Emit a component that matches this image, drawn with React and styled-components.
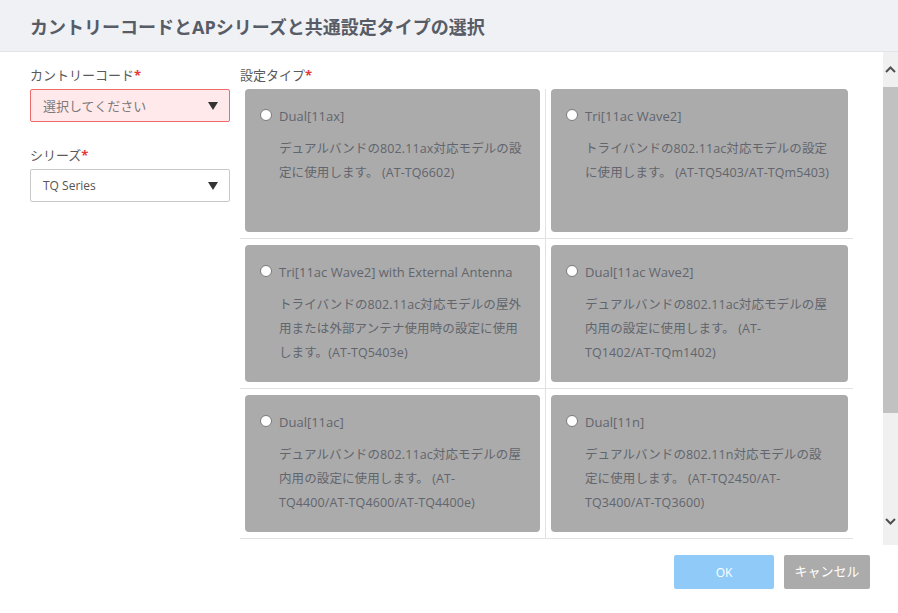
import React from "react";
import styled, { createGlobalStyle } from "styled-components";

const GlobalStyle = createGlobalStyle`
  html, body {
    margin: 0;
    padding: 0;
    background: #fff;
  }
  body {
    font-family: "Open Sans", "Noto Sans CJK JP", sans-serif;
    color: #555;
  }
`;

// models: pieces that must not break inside (line breaks only between them)
const types = [
  {
    name: "Dual[11ax]",
    desc: "デュアルバンドの802.11ax対応モデルの設定に使用します。 ",
    models: ["(AT-TQ6602)"],
  },
  {
    name: "Tri[11ac Wave2]",
    desc: "トライバンドの802.11ac対応モデルの設定に使用します。 ",
    models: ["(AT-TQ5403/AT-TQm5403)"],
  },
  {
    name: "Tri[11ac Wave2] with External Antenna",
    desc: "トライバンドの802.11ac対応モデルの屋外用または外部アンテナ使用時の設定に使用します。",
    models: ["(AT-TQ5403e)"],
  },
  {
    name: "Dual[11ac Wave2]",
    desc: "デュアルバンドの802.11ac対応モデルの屋内用の設定に使用します。 ",
    models: ["(AT-", "TQ1402/AT-TQm1402)"],
  },
  {
    name: "Dual[11ac]",
    desc: "デュアルバンドの802.11ac対応モデルの屋内用の設定に使用します。 ",
    models: ["(AT-", "TQ4400/AT-TQ4600/AT-TQ4400e)"],
  },
  {
    name: "Dual[11n]",
    desc: "デュアルバンドの802.11n対応モデルの設定に使用します。 ",
    models: ["(AT-TQ2450/AT-", "TQ3400/AT-TQ3600)"],
  },
];

const App = () => {
  return (
    <Dialog>
      <GlobalStyle />
      <Header>
        <Title>カントリーコードとAPシリーズと共通設定タイプの選択</Title>
      </Header>

      <Body>
        <Content>
          <LeftCol>
            <Field>
              <Label>
                カントリーコード<Req>*</Req>
              </Label>
              <Select $error>
                <SelectText $placeholder>選択してください</SelectText>
                <Caret />
              </Select>
            </Field>
            <Field>
              <Label>
                シリーズ<Req>*</Req>
              </Label>
              <Select>
                <SelectText>TQ Series</SelectText>
                <Caret />
              </Select>
            </Field>
          </LeftCol>

          <RightCol>
            <Label>
              設定タイプ<Req>*</Req>
            </Label>
            <Grid>
              {types.map((t, i) => (
                <Cell key={t.name} $first={i < 2} $left={i % 2 === 0}>
                  <Card>
                    <CardHead>
                      <Radio />
                      <CardTitle>{t.name}</CardTitle>
                    </CardHead>
                    <CardDesc>
                      {t.desc}
                      {t.models.map((m, j) => (
                        <React.Fragment key={m}>
                          {j > 0 && <wbr />}
                          <Model>{m}</Model>
                        </React.Fragment>
                      ))}
                    </CardDesc>
                  </Card>
                </Cell>
              ))}
            </Grid>
          </RightCol>
        </Content>

        <Scrollbar>
          <ScrollArrow>
            <svg width="11" height="7" viewBox="0 0 11 7">
              <path d="M1 6 L5.5 1.5 L10 6" fill="none" stroke="#505050" strokeWidth="2" />
            </svg>
          </ScrollArrow>
          <Thumb />
          <Track />
          <ScrollArrow>
            <svg width="11" height="7" viewBox="0 0 11 7">
              <path d="M1 1 L5.5 5.5 L10 1" fill="none" stroke="#505050" strokeWidth="2" />
            </svg>
          </ScrollArrow>
          <TrackEnd />
        </Scrollbar>
      </Body>

      <Footer>
        <Button $primary>OK</Button>
        <Button>キャンセル</Button>
      </Footer>
    </Dialog>
  );
};

const Dialog = styled.div`
  width: 898px;
  height: 613px;
  display: flex;
  flex-direction: column;
  overflow: hidden;
`;

const Header = styled.div`
  height: 51px;
  flex-shrink: 0;
  display: flex;
  align-items: center;
  padding-left: 30px;
  background: #f0f1f5;
  border-bottom: 1px solid #e3e4e8;
`;

const Title = styled.h1`
  margin: 0;
  font-size: 18px;
  font-weight: 700;
  color: #575c66;
`;

const Body = styled.div`
  height: 493px;
  flex-shrink: 0;
  display: flex;
  overflow: hidden;
`;

const Content = styled.div`
  flex: 1;
  display: flex;
  gap: 10px;
  padding: 14px 30px 0 30px;
`;

const LeftCol = styled.div`
  width: 200px;
  display: flex;
  flex-direction: column;
  gap: 24px;
`;

const Field = styled.div`
  display: flex;
  flex-direction: column;
`;

const Label = styled.div`
  font-size: 13px;
  line-height: 18px;
  color: #5a5a5a;
  margin-bottom: 5px;
`;

const Req = styled.span`
  color: #e53935;
  font-weight: 700;
`;

const Select = styled.div`
  height: 33px;
  box-sizing: border-box;
  display: flex;
  align-items: center;
  justify-content: space-between;
  padding: 0 11px 0 12px;
  border: 1px solid ${(p) => (p.$error ? "#ef6b6b" : "#c9c9c9")};
  background: ${(p) => (p.$error ? "#ffe9ea" : "#fff")};
  border-radius: 2px;
`;

const SelectText = styled.span`
  font-size: ${(p) => (p.$placeholder ? "13px" : "12px")};
  color: ${(p) => (p.$placeholder ? "#7a7a7a" : "#555")};
`;

const Caret = styled.span`
  width: 0;
  height: 0;
  border-left: 5px solid transparent;
  border-right: 5px solid transparent;
  border-top: 8px solid #333;
`;

const RightCol = styled.div`
  width: 613px;
  display: flex;
  flex-direction: column;
`;

const Grid = styled.div`
  display: grid;
  grid-template-columns: 306px 307px;
  grid-auto-rows: 150px;
`;

const Cell = styled.div`
  box-sizing: border-box;
  padding: ${(p) => (p.$first ? "0 5px 6px" : "6px 5px 6px")};
  border-bottom: 1px solid #e2e2e2;
  border-right: ${(p) => (p.$left ? "1px solid #e2e2e2" : "none")};
  display: flex;
`;

const Card = styled.div`
  flex: 1;
  background: #ababab;
  border-radius: 4px;
  padding: 17px 16px 0 15px;
  box-sizing: border-box;
`;

const CardHead = styled.div`
  display: flex;
  align-items: center;
  gap: 7px;
  height: 20px;
`;

const Radio = styled.span`
  width: 12px;
  height: 12px;
  box-sizing: border-box;
  border-radius: 50%;
  background: #fff;
  border: 1px solid #7a7a7a;
  flex-shrink: 0;
  margin-top: -3px;
`;

const CardTitle = styled.span`
  font-size: 13px;
  color: #62656d;
`;

const CardDesc = styled.p`
  margin: 11px 0 0 19px;
  font-size: 12.5px;
  line-height: 24px;
  letter-spacing: 0.1px;
  color: #62656d;
`;

const Model = styled.span`
  white-space: nowrap;
`;

const Scrollbar = styled.div`
  width: 15px;
  flex-shrink: 0;
  display: flex;
  flex-direction: column;
  background: #f0f0f0;
`;

const ScrollArrow = styled.div`
  height: 35px;
  display: flex;
  align-items: center;
  justify-content: center;
  flex-shrink: 0;
`;

const Thumb = styled.div`
  height: 326px;
  background: #c1c1c1;
  flex-shrink: 0;
`;

const Track = styled.div`
  flex: 1;
`;

const TrackEnd = styled.div`
  height: 6px;
`;

const Footer = styled.div`
  flex: 1;
  display: flex;
  justify-content: flex-end;
  align-items: flex-start;
  gap: 10px;
  padding: 10px 28px 0 0;
`;

const Button = styled.button`
  height: 34px;
  width: ${(p) => (p.$primary ? "100px" : "86px")};
  border: none;
  border-radius: 2px;
  background: ${(p) => (p.$primary ? "#90caf9" : "#ababab")};
  color: #fff;
  font-family: "Open Sans", "Noto Sans CJK JP", sans-serif;
  font-size: ${(p) => (p.$primary ? "12px" : "13px")};
  padding: 0 0 ${(p) => (p.$primary ? "0" : "4px")};
`;

export default App;
